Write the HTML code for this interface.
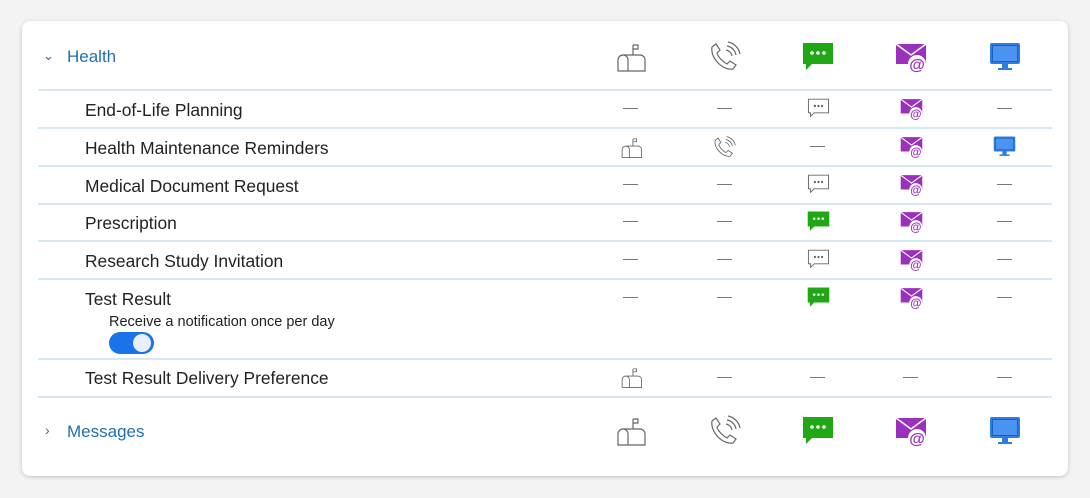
<!DOCTYPE html><html><head><style>
body{margin:0;width:1090px;height:498px;background:#f3f3f3;font-family:"Liberation Sans",sans-serif;position:relative;overflow:hidden}
.card{position:absolute;left:22px;top:21px;width:1046px;height:455px;background:#fff;border-radius:8px;box-shadow:0 1px 4px rgba(0,0,0,.2)}
.t{position:absolute;font-size:17.4px;color:#222;white-space:nowrap;line-height:20px}
.h{color:#1f6fb2;font-size:17px}
.ln{position:absolute;left:38px;width:1014px;height:2px;background:#d6e8f4}
.i{position:absolute}
.d{position:absolute;width:15px;height:1px;background:#777}
</style></head><body>
<svg width="0" height="0" style="position:absolute">
<defs>
<symbol id="mb" viewBox="0 0 32 32"><g fill="none" stroke="#666" stroke-width="1.2"><path d="M3 30V19a5 5 0 0 1 10 0v11zM8 14h17a5 5 0 0 1 5 5v11H13M18 14V4M18 4h5v4h-5"/></g></symbol>
<symbol id="ph" viewBox="0 0 32 32"><g fill="none" stroke="#666" stroke-width="1.2"><path d="M7 3l4 6-3 3c1 4 6 9 10 11l3-3 6 4-3 4C14 30 1 17 3 6z"/><path d="M17 9a7 7 0 0 1 6 6M18 5a11 11 0 0 1 9 9M19 1a15 15 0 0 1 12 12"/></g></symbol>
<symbol id="cg" viewBox="0 0 32 32"><path d="M1 2h30v21H10l-6 6v-6H1z" fill="#1fa814"/><g fill="#fff"><circle cx="10" cy="12" r="1.8"/><circle cx="16" cy="12" r="1.8"/><circle cx="22" cy="12" r="1.8"/></g></symbol>
<symbol id="co" viewBox="0 0 32 32"><path d="M2 3h28v19H10l-5 5v-5H2z" fill="#fff" stroke="#666" stroke-width="1.3"/><g fill="#555"><circle cx="11" cy="12.5" r="1.5"/><circle cx="16" cy="12.5" r="1.5"/><circle cx="21" cy="12.5" r="1.5"/></g></symbol>
<symbol id="em" viewBox="0 0 32 32"><path d="M1 3h30v20H1z" fill="#9b2fbe"/><path d="M1 3l15 11L31 3" fill="none" stroke="#fff" stroke-width="1.5"/><circle cx="22" cy="23" r="9" fill="#fff"/><text x="22" y="29" font-size="16" font-family="Liberation Sans" fill="#9b2fbe" text-anchor="middle" font-weight="bold">@</text></symbol>
<symbol id="pc" viewBox="0 0 32 32"><rect x="1" y="2" width="30" height="21" rx="2" fill="#2f7de0"/><rect x="3.5" y="4.5" width="25" height="16" fill="#4a93f0" stroke="#1d5fbf" stroke-width="1"/><path d="M13 23h6v4h4v2H9v-2h4z" fill="#2f7de0"/></symbol>
</defs></svg>
<div class="card"></div>
<div class="t h" style="left:43px;top:46px;font-size:13px">&#8964;</div>
<div class="t h" style="left:67px;top:47px">Health</div>
<svg class="i" style="left:615px;top:41px" width="32" height="32"><use href="#mb"/></svg>
<svg class="i" style="left:709px;top:41px" width="32" height="32"><use href="#ph"/></svg>
<svg class="i" style="left:802px;top:41px" width="32" height="32"><use href="#cg"/></svg>
<svg class="i" style="left:895px;top:41px" width="32" height="32"><use href="#em"/></svg>
<svg class="i" style="left:989px;top:41px" width="32" height="32"><use href="#pc"/></svg>
<div class="ln" style="top:89px"></div>
<div class="ln" style="top:127px"></div>
<div class="ln" style="top:165px"></div>
<div class="ln" style="top:203px"></div>
<div class="ln" style="top:240px"></div>
<div class="ln" style="top:278px"></div>
<div class="ln" style="top:358px"></div>
<div class="ln" style="top:396px"></div>

<div class="t" style="left:85px;top:100px">End-of-Life Planning</div>
<div class="d" style="left:623px;top:108px"></div><div class="d" style="left:717px;top:108px"></div>
<svg class="i" style="left:807px;top:97px" width="23" height="23"><use href="#co"/></svg>
<svg class="i" style="left:900px;top:97px" width="23" height="23"><use href="#em"/></svg>
<div class="d" style="left:997px;top:108px"></div>

<div class="t" style="left:85px;top:138px">Health Maintenance Reminders</div>
<svg class="i" style="left:620px;top:136px" width="23" height="23"><use href="#mb"/></svg>
<svg class="i" style="left:713px;top:136px" width="23" height="23"><use href="#ph"/></svg>
<div class="d" style="left:810px;top:146px"></div>
<svg class="i" style="left:900px;top:135px" width="23" height="23"><use href="#em"/></svg>
<svg class="i" style="left:993px;top:135px" width="23" height="23"><use href="#pc"/></svg>

<div class="t" style="left:85px;top:176px">Medical Document Request</div>
<div class="d" style="left:623px;top:184px"></div><div class="d" style="left:717px;top:184px"></div>
<svg class="i" style="left:807px;top:173px" width="23" height="23"><use href="#co"/></svg>
<svg class="i" style="left:900px;top:173px" width="23" height="23"><use href="#em"/></svg>
<div class="d" style="left:997px;top:184px"></div>

<div class="t" style="left:85px;top:213px">Prescription</div>
<div class="d" style="left:623px;top:221px"></div><div class="d" style="left:717px;top:221px"></div>
<svg class="i" style="left:807px;top:210px" width="23" height="23"><use href="#cg"/></svg>
<svg class="i" style="left:900px;top:210px" width="23" height="23"><use href="#em"/></svg>
<div class="d" style="left:997px;top:221px"></div>

<div class="t" style="left:85px;top:251px">Research Study Invitation</div>
<div class="d" style="left:623px;top:259px"></div><div class="d" style="left:717px;top:259px"></div>
<svg class="i" style="left:807px;top:248px" width="23" height="23"><use href="#co"/></svg>
<svg class="i" style="left:900px;top:248px" width="23" height="23"><use href="#em"/></svg>
<div class="d" style="left:997px;top:259px"></div>

<div class="t" style="left:85px;top:289px">Test Result</div>
<div class="t" style="left:109px;top:312px;font-size:14.5px">Receive a notification once per day</div>
<div style="position:absolute;left:109px;top:332px;width:45px;height:22px;border-radius:11px;background:#1a73e8"></div>
<div style="position:absolute;left:133px;top:334px;width:18px;height:18px;border-radius:9px;background:#e8f0fe"></div>
<div class="d" style="left:623px;top:297px"></div><div class="d" style="left:717px;top:297px"></div>
<svg class="i" style="left:807px;top:286px" width="23" height="23"><use href="#cg"/></svg>
<svg class="i" style="left:900px;top:286px" width="23" height="23"><use href="#em"/></svg>
<div class="d" style="left:997px;top:297px"></div>

<div class="t" style="left:85px;top:368px">Test Result Delivery Preference</div>
<svg class="i" style="left:620px;top:366px" width="23" height="23"><use href="#mb"/></svg>
<div class="d" style="left:717px;top:377px"></div><div class="d" style="left:810px;top:377px"></div><div class="d" style="left:903px;top:377px"></div><div class="d" style="left:997px;top:377px"></div>

<div class="t h" style="left:45px;top:420px;font-size:14px">&#8250;</div>
<div class="t h" style="left:67px;top:422px">Messages</div>
<svg class="i" style="left:615px;top:415px" width="32" height="32"><use href="#mb"/></svg>
<svg class="i" style="left:709px;top:415px" width="32" height="32"><use href="#ph"/></svg>
<svg class="i" style="left:802px;top:415px" width="32" height="32"><use href="#cg"/></svg>
<svg class="i" style="left:895px;top:415px" width="32" height="32"><use href="#em"/></svg>
<svg class="i" style="left:989px;top:415px" width="32" height="32"><use href="#pc"/></svg>
</body></html>
